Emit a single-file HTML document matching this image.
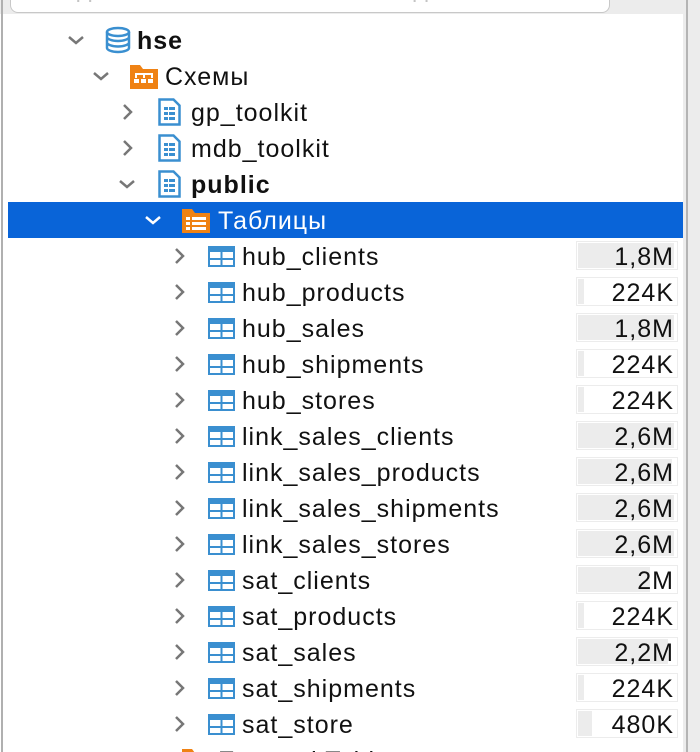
<!DOCTYPE html>
<html><head><meta charset="utf-8"><style>
html,body{margin:0;width:700px;height:752px;overflow:hidden}
body{background:#fff;font-family:"Liberation Sans","Noto Sans CJK JP",sans-serif;position:relative}
.top{position:absolute;left:0;top:0;width:700px;height:14px;background:#ececec}
.search{position:absolute;left:10px;top:-20px;width:598px;height:31px;background:#fff;border:1px solid #c8c8c8;border-radius:8px;overflow:hidden}
.search span{position:absolute;left:20px;top:-6px;font-size:25px;color:#c4c4c4;white-space:nowrap;letter-spacing:1px}
.lline{position:absolute;left:1px;top:0;width:2px;height:752px;background:#b0b0b0}
.rside{position:absolute;left:683px;top:0;width:17px;height:752px;background:#ececec}
.rline{position:absolute;left:686px;top:0;width:2px;height:752px;background:#b4b4b4}
.row{position:absolute;left:0;width:683px;height:36px;font-size:25px;line-height:36px;color:#111;white-space:nowrap;letter-spacing:1px}
.sel{background:#0964d8;color:#fff;left:8px;width:675px}
.chev{position:absolute;top:0}
.ic{position:absolute;top:6px}
.t{position:absolute;top:1px}
.box{position:absolute;left:576px;top:3px;width:100px;height:27px;border:1px solid #ececec;background:#fff}
.fill{position:absolute;left:1px;top:1px;bottom:1px;background:#ececec}
.num{position:absolute;right:3px;top:-3px;font-size:25px;color:#111;letter-spacing:1px}
</style></head><body>
<div class="top"><div class="search"><span>Введите часть имени объекта для поиска</span></div></div>
<div class="rside"></div><div class="rline"></div><div class="lline"></div>

<div class="row" style="top:22px">
<svg class="chev" style="left:66px" width="20" height="36"><path d="M3 15l7 6 7-6" fill="none" stroke="#777" stroke-width="2.5"/></svg>
<svg class="ic" style="left:104px;top:4px" width="28" height="28"><g fill="none" stroke="#3a8fd0" stroke-width="2.5"><ellipse cx="14" cy="6" rx="11" ry="4"/><path d="M3 6v16c0 2 5 4 11 4s11-2 11-4V6M3 11c0 2 5 4 11 4s11-2 11-4M3 16.5c0 2 5 4 11 4s11-2 11-4"/></g></svg>
<span class="t" style="left:137px;font-weight:bold">hse</span></div>

<div class="row" style="top:58px">
<svg class="chev" style="left:91px" width="20" height="36"><path d="M3 15l7 6 7-6" fill="none" stroke="#777" stroke-width="2.5"/></svg>
<svg class="ic" style="left:130px;top:5px" width="28" height="26"><path d="M0 2h10l3 4h15v20H0z" fill="#ef8214"/><g fill="#fff"><rect x="4" y="16" width="5" height="4"/><rect x="11" y="16" width="5" height="4"/><rect x="18" y="16" width="5" height="4"/><rect x="5" y="10" width="18" height="2"/><rect x="5" y="10" width="2" height="5"/><rect x="13" y="10" width="2" height="5"/><rect x="21" y="10" width="2" height="5"/></g></svg>
<span class="t" style="left:165px">Схемы</span></div>

<div class="row" style="top:94px">
<svg class="chev" style="left:120px" width="16" height="36"><path d="M4 11l7 7-7 7" fill="none" stroke="#777" stroke-width="2.5"/></svg>
<svg class="ic" style="left:158px;top:4px" width="24" height="28"><path d="M1.5 1.5h14l6 6v19h-20z" fill="#fff" stroke="#3a8fd0" stroke-width="2.5"/><g fill="#3a8fd0"><rect x="6" y="9" width="4" height="3"/><rect x="11" y="9" width="6" height="3"/><rect x="6" y="14" width="4" height="3"/><rect x="11" y="14" width="6" height="3"/><rect x="6" y="19" width="4" height="3"/><rect x="11" y="19" width="6" height="3"/></g></svg>
<span class="t" style="left:191px">gp_toolkit</span></div>
<div class="row" style="top:130px">
<svg class="chev" style="left:120px" width="16" height="36"><path d="M4 11l7 7-7 7" fill="none" stroke="#777" stroke-width="2.5"/></svg>
<svg class="ic" style="left:158px;top:4px" width="24" height="28"><path d="M1.5 1.5h14l6 6v19h-20z" fill="#fff" stroke="#3a8fd0" stroke-width="2.5"/><g fill="#3a8fd0"><rect x="6" y="9" width="4" height="3"/><rect x="11" y="9" width="6" height="3"/><rect x="6" y="14" width="4" height="3"/><rect x="11" y="14" width="6" height="3"/><rect x="6" y="19" width="4" height="3"/><rect x="11" y="19" width="6" height="3"/></g></svg>
<span class="t" style="left:191px">mdb_toolkit</span></div>
<div class="row" style="top:166px">
<svg class="chev" style="left:117px" width="20" height="36"><path d="M3 15l7 6 7-6" fill="none" stroke="#777" stroke-width="2.5"/></svg>
<svg class="ic" style="left:158px;top:4px" width="24" height="28"><path d="M1.5 1.5h14l6 6v19h-20z" fill="#fff" stroke="#3a8fd0" stroke-width="2.5"/><g fill="#3a8fd0"><rect x="6" y="9" width="4" height="3"/><rect x="11" y="9" width="6" height="3"/><rect x="6" y="14" width="4" height="3"/><rect x="11" y="14" width="6" height="3"/><rect x="6" y="19" width="4" height="3"/><rect x="11" y="19" width="6" height="3"/></g></svg>
<span class="t" style="left:191px;font-weight:bold">public</span></div>

<div class="row sel" style="top:202px">
<svg class="chev" style="left:135px" width="20" height="36"><path d="M3 15l7 6 7-6" fill="none" stroke="#fff" stroke-width="2.5"/></svg>
<svg class="ic" style="left:174px;top:5px" width="28" height="26"><path d="M0 2h10l3 4h15v20H0z" fill="#ef8214"/><g fill="#fff"><rect x="4" y="10" width="4" height="3"/><rect x="10" y="10" width="14" height="3"/><rect x="4" y="15" width="4" height="3"/><rect x="10" y="15" width="14" height="3"/><rect x="4" y="20" width="4" height="3"/><rect x="10" y="20" width="14" height="3"/></g></svg>
<span class="t" style="left:210px">Таблицы</span></div>

<div id="tables"></div>

<div class="row" style="top:742px">
<svg class="chev" style="left:140px" width="20" height="36"><path d="M3 15l7 6 7-6" fill="none" stroke="#777" stroke-width="2.5"/></svg>
<svg class="ic" style="left:182px;top:5px" width="28" height="26"><path d="M0 2h10l3 4h15v20H0z" fill="#ef8214"/></svg>
<span class="t" style="left:218px">External Tables</span></div>

<script>
var d=[["hub_clients","1,8M",96],["hub_products","224K",6],["hub_sales","1,8M",96],["hub_shipments","224K",6],["hub_stores","224K",6],["link_sales_clients","2,6M",96],["link_sales_products","2,6M",94],["link_sales_shipments","2,6M",96],["link_sales_stores","2,6M",96],["sat_clients","2M",72],["sat_products","224K",6],["sat_sales","2,2M",90],["sat_shipments","224K",6],["sat_store","480K",14]];
var h="";
d.forEach(function(r,i){var y=238+i*36;
h+='<div class="row" style="top:'+y+'px"><svg class="chev" style="left:172px" width="16" height="36"><path d="M4 11l7 7-7 7" fill="none" stroke="#777" stroke-width="2.5"/></svg>'+
'<svg class="ic" style="left:208px;top:8px" width="27" height="21"><rect x="1" y="1" width="25" height="19" fill="#fff" stroke="#3a8fd0" stroke-width="2"/><rect x="1" y="1" width="25" height="5" fill="#3a8fd0"/><path d="M13.5 1v19M1 13h25" stroke="#3a8fd0" stroke-width="2"/></svg>'+
'<span class="t" style="left:242px">'+r[0]+'</span><div class="box"><div class="fill" style="width:'+r[2]+'px"></div><span class="num">'+r[1]+'</span></div></div>';});
document.getElementById("tables").innerHTML=h;
</script>
</body></html>
